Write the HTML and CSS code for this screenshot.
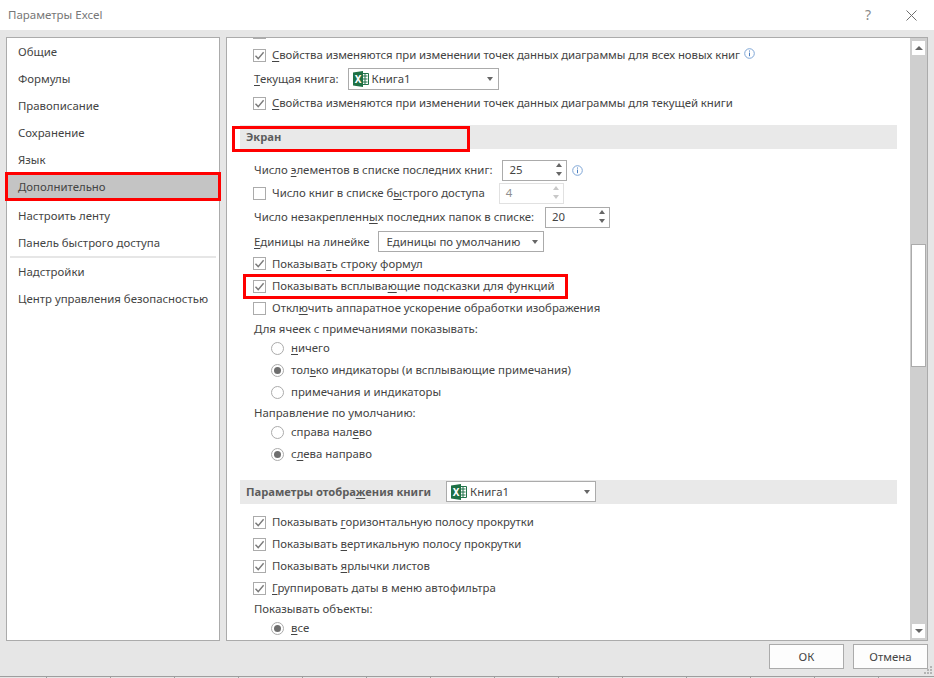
FILE: index.html
```html
<!DOCTYPE html>
<html lang="ru">
<head>
<meta charset="utf-8">
<title>Параметры Excel</title>
<link rel="stylesheet" href="styles.css">
</head>
<body>
<svg class="defs" width="0" height="0" aria-hidden="true">
  <defs>
    <symbol id="check" viewBox="0 0 13 13"><path d="M2.500 6.800 5.200 9.600 10.600 3.200" fill="none" stroke="#7a7a7a" stroke-width="1.400"/></symbol>
    <symbol id="xl" viewBox="0 0 16 16">
      <path d="M9 2.500h6.500v11H9z" fill="#fff" stroke="#21734a"/>
      <path d="M10 5h4.500M10 8h4.500M10 11h4.500M12 3v10" stroke="#21734a" stroke-width="1"/>
      <path d="M0 1.500 10 0v16L0 14.500z" fill="#1e7145"/>
      <text x="5" y="11.500" class="xl-x">X</text>
    </symbol>
    <symbol id="info" viewBox="0 0 11 11"><circle cx="5.500" cy="5.500" r="4.800" fill="none" stroke="#7fa6d6"/><path d="M5.500 4.600v3.600M5.500 2.500v1.100" stroke="#4b7fc0"/></symbol>
  </defs>
</svg>
<div class="dialog">
  <header class="titlebar">
    <span class="title">Параметры Excel</span>
    <span class="help">?</span>
    <svg class="close" width="11" height="11" viewBox="0 0 11 11"><path d="M.5.500l10 10M10.500.500l-10 10" stroke="#6e6e6e" fill="none"/></svg>
  </header>
  <main class="body">
    <nav class="nav">
      <div class="nav-item">Общие</div>
      <div class="nav-item">Формулы</div>
      <div class="nav-item">Правописание</div>
      <div class="nav-item">Сохранение</div>
      <div class="nav-item">Язык</div>
      <div class="nav-item selected">Дополнительно</div>
      <div class="nav-item after-sel">Настроить ленту</div>
      <div class="nav-item lifted">Панель быстрого доступа</div>
      <div class="nav-sep"></div>
      <div class="nav-item">Надстройки</div>
      <div class="nav-item">Центр управления безопасностью</div>
    </nav>
    <section class="panel">
      <div class="scroll">
        <div class="row stub"><span class="box"></span></div>
        <div class="row"><span class="box"><svg><use href="#check"/></svg></span><span class="tight"><u>С</u>войства изменяются при изменении точек данных диаграммы для всех новых книг</span><svg class="info raised"><use href="#info"/></svg></div>
        <div class="row plain"><span><u>Т</u>екущая книга:</span><span class="combo c1"><svg class="xl"><use href="#xl"/></svg>Книга1<i class="arrow"></i></span></div>
        <div class="row"><span class="box"><svg><use href="#check"/></svg></span><span class="tight"><u>С</u>войства изменяются при изменении точек данных диаграммы для текущей книги</span></div>
        <h2 class="section s1">Экран</h2>
        <div class="row plain r170"><span>Число <u>э</u>лементов в списке последних книг:</span><span class="spin s25"><b>25</b><i class="ud"></i></span><svg class="info spaced"><use href="#info"/></svg></div>
        <div class="row"><span class="box"></span><span>Число книг в списке б<u>ы</u>строго доступа</span><span class="spin off"><b>4</b><i class="ud"></i></span></div>
        <div class="row plain"><span>Число незакрепленн<u>ы</u>х последних папок в списке:</span><span class="spin s20"><b>20</b><i class="ud"></i></span></div>
        <div class="row plain r241"><span><u>Е</u>диницы на линейке</span><span class="combo c2">Единицы по умолчанию<i class="arrow"></i></span></div>
        <div class="row r264"><span class="box"><svg><use href="#check"/></svg></span><span>Показыва<u>т</u>ь строку формул</span></div>
        <div class="row r22"><span class="box"><svg><use href="#check"/></svg></span><span>Показывать всплыва<u>ю</u>щие подсказки для функций</span></div>
        <div class="row r22"><span class="box"></span><span>Откл<u>ю</u>чить аппаратное ускорение обработки изображения</span></div>
        <div class="row plain r-label"><span>Для ячеек с примечаниями показывать:</span></div>
        <div class="row radio-row"><span class="radio"></span><span><u>н</u>ичего</span></div>
        <div class="row radio-row"><span class="radio on"></span><span>тол<u>ь</u>ко индикаторы (и всплывающие примечания)</span></div>
        <div class="row radio-row"><span class="radio"></span><span>примечания и индикаторы</span></div>
        <div class="row plain r-label"><span>Направление по умолчанию:</span></div>
        <div class="row radio-row"><span class="radio"></span><span>справа нал<u>е</u>во</span></div>
        <div class="row radio-row"><span class="radio on"></span><span>с<u>л</u>ева направо</span></div>
        <h2 class="section s2"><span>Параметры отобра<u>ж</u>ения книги</span><span class="combo c3"><svg class="xl"><use href="#xl"/></svg>Книга1<i class="arrow"></i></span></h2>
        <div class="row r22"><span class="box"><svg><use href="#check"/></svg></span><span>Показывать <u>г</u>оризонтальную полосу прокрутки</span></div>
        <div class="row r22"><span class="box"><svg><use href="#check"/></svg></span><span>Показывать <u>в</u>ертикальную полосу прокрутки</span></div>
        <div class="row r22"><span class="box"><svg><use href="#check"/></svg></span><span>Показывать <u>я</u>рлычки листов</span></div>
        <div class="row r22"><span class="box"><svg><use href="#check"/></svg></span><span><u>Г</u>руппировать даты в меню автофильтра</span></div>
        <div class="row plain r-label"><span>Показывать объекты:</span></div>
        <div class="row radio-row"><span class="radio on"></span><span><u>в</u>се</span></div>
      </div>
      <aside class="scrollbar">
        <span class="sb-btn"><i class="up"></i></span>
        <span class="sb-track"><span class="sb-thumb"></span></span>
        <span class="sb-btn"><i class="down"></i></span>
      </aside>
      <div class="mark m-screen"></div>
      <div class="mark m-tooltip"></div>
    </section>
  </main>
  <footer class="footer">
    <button class="btn">ОК</button>
    <button class="btn">Отмена</button>
  </footer>
  <div class="bottom-edge"></div>
  <svg class="grip" width="9" height="9" viewBox="0 0 9 9"><path d="M6 0h2v2H6zM3 3h2v2H3zM6 3h2v2H6zM0 6h2v2H0zM3 6h2v2H3zM6 6h2v2H6z" fill="#b4b4b4"/></svg>
</div>
</body>
</html>
```
FILE: styles.css
```css
* { box-sizing: border-box; }
html, body { margin: 0; height: 100%; }
body { background: #e6e6e6; font: 11.4px/16px "Noto Sans", "Open Sans", sans-serif; color: #444; overflow: hidden; }
.defs { position: absolute; }
.dialog { width: 934px; height: 678px; display: flex; flex-direction: column; position: relative; }
.titlebar { height: 30px; flex: none; background: #fff; display: flex; align-items: center; padding: 0 17px 0 8px; }
.title { flex: 1; color: #777; font-size: 11.5px; }
.help { color: #8a8a8a; font-size: 14px; margin-right: 35px; }
.close { flex: none; }
.body { height: 611px; flex: none; padding: 7px 6px 0 6px; display: flex; gap: 6px; }
.nav { width: 214px; flex: none; background: #fff; border: 1px solid #ababab; position: relative; }
.nav-item { height: 27px; padding-left: 11px; display: flex; align-items: center; }
.nav-item.selected { margin: -1px -2px 0; padding: 1px 0 0 10px; background: #c4c4c4; border: 3px solid #f00; height: 29px; position: relative; }
.nav-item.after-sel { height: 29px; }
.nav-item.lifted { padding-bottom: 2px; }
.nav-sep { height: 2px; background: #e6e6e6; margin: -1px 3px 0; }
.panel { width: 702px; flex: none; background: #fff; border: 1px solid #ababab; display: flex; position: relative; overflow: hidden; }
.scroll { flex: 1; min-width: 0; overflow: hidden; padding: 0 13px; }
.row { display: flex; align-items: center; height: 24px; padding-left: 13px; white-space: nowrap; }
.row.stub { height: 5px; align-items: flex-start; }
.row.stub .box { margin-top: -12px; }
.row.plain { padding-left: 14px; }
.tight { letter-spacing: -.06px; }
.box { width: 13px; height: 13px; flex: none; border: 1px solid #ababab; background: #fff; margin-right: 6px; position: relative; }
.box svg { position: absolute; left: -1px; top: -1px; width: 13px; height: 13px; }
u { text-underline-offset: 2px; text-decoration-thickness: 1px; }
.info { width: 11px; height: 11px; flex: none; }
.info.raised { margin-left: 4px; margin-top: -3px; }
.info.spaced { margin-left: 5px; margin-top: 1px; }
.combo { display: inline-flex; align-items: center; height: 22px; background: #fff; border: 1px solid #ababab; position: relative; font-weight: 400; color: #444; }
.c1 { width: 151px; margin-left: 9px; padding-left: 4px; }
.c2 { width: 166px; margin-left: 9px; padding-left: 7px; height: 21px; }
.c3 { width: 150px; margin-left: 15px; padding-left: 4px; height: 21px; font-size: 11.4px; }
.xl { width: 16px; height: 16px; margin-right: 3px; flex: none; }
.xl-x { font: 700 10px "Noto Sans", sans-serif; fill: #fff; text-anchor: middle; }
.arrow { position: absolute; right: 5px; top: 8px; width: 0; height: 0; border: 3.500px solid transparent; border-top: 4px solid #666; border-bottom: 0; }
.spin { display: inline-flex; align-items: center; width: 65px; height: 21px; border: 1px solid #ababab; background: #fff; position: relative; padding-left: 6px; margin-left: 10px; }
.spin b { font-weight: 400; }
.spin.s20 { margin-left: 11px; }
.spin.off { margin-left: 14px; border-color: #e1e1e1; color: #8f8f8f; }
.ud { position: absolute; right: 4px; top: 2px; width: 6px; height: 13px; }
.ud::before, .ud::after { content: ""; position: absolute; left: 0; border: 3px solid transparent; }
.ud::before { top: 0; border-bottom: 4px solid #666; border-top: 0; }
.ud::after { bottom: 0; border-top: 4px solid #666; border-bottom: 0; }
.spin.off .ud::before { border-bottom-color: #c8c8c8; }
.spin.off .ud::after { border-top-color: #c8c8c8; }
.r170 { height: 22px; }
.r241 { height: 25px; }
.r264 { height: 21px; padding-bottom: 2px; }
.r22 { height: 22px; }
.r-label { height: 20px; margin-bottom: -2px; }
.radio-row { height: 22px; padding-left: 31px; }
.radio { width: 13px; height: 13px; flex: none; border: 1px solid #ababab; border-radius: 50%; margin-right: 7px; position: relative; background: #fff; }
.radio.on::after { content: ""; position: absolute; inset: 2px; background: #6e6e6e; border-radius: 50%; }
.section { margin: 0; height: 24px; background: #e9e9e9; padding-left: 6px; font-size: 11.2px; font-weight: 700; color: #5c5c5c; display: flex; align-items: center; line-height: 16px; }
.s1 { margin-top: 10px; margin-bottom: 10px; }
.s2 { margin-top: 15px; margin-bottom: 7px; align-items: flex-start; padding-top: 1px; }
.s2 > span:first-child { line-height: 21px; }
.scrollbar { width: 17px; flex: none; background: #cfcfcf; display: flex; flex-direction: column; padding: 2px 1px 1px; margin: 0; }
.sb-btn { height: 16px; background: #fff; border: 1px solid #cfcfcf; flex: none; display: flex; align-items: center; justify-content: center; }
.sb-track { flex: 1; position: relative; display: block; }
.sb-thumb { position: absolute; left: 0; right: 0; top: 188px; height: 123px; background: #fff; border: 1px solid #ababab; }
.up { border: 4px solid transparent; border-bottom: 4px solid #666; border-top: 0; width: 0; height: 0; }
.down { border: 4px solid transparent; border-top: 4px solid #666; border-bottom: 0; width: 0; height: 0; }
.mark { position: absolute; border: 3px solid #f00; pointer-events: none; }
.m-screen { left: 5px; top: 88px; width: 238px; height: 26px; }
.m-tooltip { left: 16px; top: 236px; width: 325px; height: 25px; }
.footer { height: 35px; flex: none; display: flex; justify-content: flex-end; gap: 9px; padding: 3px 6px 0 0; }
.btn { width: 75px; height: 25px; background: #fdfdfd; border: 1px solid #ababab; font: 11.4px "Noto Sans", sans-serif; color: #444; padding: 0; }
.bottom-edge { height: 2px; flex: none; border-top: 1px solid #9e9e9e; background: repeating-linear-gradient(90deg, #e6e6e6 0 46px, #9e9e9e 46px 47px, #e6e6e6 47px 64px); }
.grip { position: absolute; right: 1px; bottom: 3px; }
```
